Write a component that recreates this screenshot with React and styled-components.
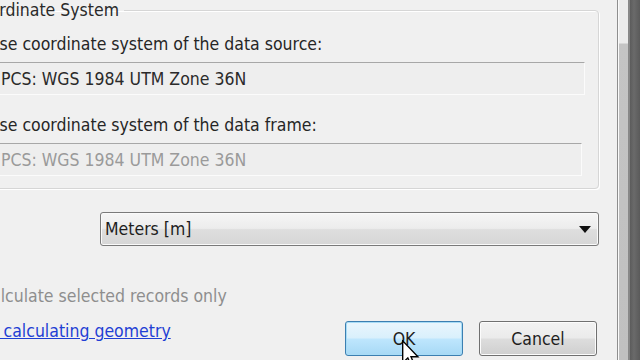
import React from "react";
import styled, { createGlobalStyle } from "styled-components";

const Global = createGlobalStyle`
  html, body { margin: 0; padding: 0; background: #f0f0f0; }
  body { font-family: "DejaVu Sans Condensed", "DejaVu Sans", sans-serif; }
`;

const Screen = styled.div`
  width: 640px;
  height: 360px;
  overflow: hidden;
  display: flex;
  background: #f0f0f0;
  position: relative;
  font-size: 17.5px;
  color: #222;
`;

const Client = styled.div`
  flex: 1;
  display: flex;
  flex-direction: column;
  margin-left: -50px;
  padding-right: 18px;
  min-width: 0;
`;

const Group = styled.fieldset`
  margin: 0;
  padding: 0 13px 12px 37px;
  border: 1px solid #d6d6d6;
  box-shadow: inset 1px 1px 0 #fff, 1px 1px 0 #fff;
  border-radius: 4px;
  display: flex;
  flex-direction: column;
`;

const Legend = styled.legend`
  padding: 0 5px;
  margin-left: -24px;
  line-height: 20px;
  color: #2a2a2a;
`;

const Label = styled.div`
  line-height: 20px;
  height: 20px;
  margin: ${(p) => p.$top}px 0 8px 0;
  color: #262626;
  white-space: nowrap;
`;

const Field = styled.div`
  height: 33px;
  box-sizing: border-box;
  border-top: 1px solid #a7a7a7;
  border-left: 1px solid #a7a7a7;
  border-right: 1px solid #fbfbfb;
  border-bottom: 1px solid #fbfbfb;
  background: #eeeeee;
  margin: 0 ${(p) => p.$right}px 0 8px;
  padding: 0 0 0 4px;
  display: flex;
  align-items: center;
  color: ${(p) => (p.$disabled ? "#9a9a9a" : "#2a2a2a")};
  white-space: nowrap;
`;

const UnitsRow = styled.div`
  display: flex;
  justify-content: flex-end;
  margin-top: 23px;
`;

const Combo = styled.div`
  width: 499px;
  height: 34px;
  box-sizing: border-box;
  border: 1px solid #7a7a7a;
  border-radius: 3px;
  background: linear-gradient(#f6f6f6 0%, #ececec 48%, #dedede 52%, #d6d6d6 100%);
  box-shadow: inset 0 0 0 1px #fafafa;
  display: flex;
  align-items: center;
  justify-content: space-between;
  padding: 0 7px 0 4px;
  color: #1e1e1e;
`;

const Arrow = styled.span`
  width: 0;
  height: 0;
  border-left: 6px solid transparent;
  border-right: 6px solid transparent;
  border-top: 7px solid #111;
`;

const Check = styled.div`
  margin: 40px 0 0 0;
  line-height: 20px;
  color: #8e8e8e;
  white-space: nowrap;
  padding-left: 30px;
`;

const Footer = styled.div`
  display: flex;
  align-items: flex-start;
  margin-top: 15px;
  padding: 0 2px 0 2px;
`;

const Link = styled.a`
  color: #1f3fd4;
  text-decoration: underline;
  flex: 1;
  white-space: nowrap;
  line-height: 20px;
  margin-top: 0;
`;

const Button = styled.div`
  width: 118px;
  height: 35px;
  flex-shrink: 0;
  box-sizing: border-box;
  border-radius: 3px;
  border: 1px solid ${(p) => (p.$focus ? "#3c7fb1" : "#707070")};
  background: ${(p) =>
    p.$focus
      ? "linear-gradient(#eaf6fd 0%, #d9f0fc 48%, #bee6fd 52%, #a7d9f5 100%)"
      : "linear-gradient(#f2f2f2 0%, #ebebeb 48%, #dddddd 52%, #cfcfcf 100%)"};
  box-shadow: inset 0 0 0 1px ${(p) => (p.$focus ? "#a8dcf6" : "#fcfcfc")};
  display: flex;
  align-items: center;
  justify-content: center;
  color: #1e1e1e;
  margin-left: ${(p) => p.$gap || 0}px;
`;

const Frame = styled.div`
  width: 23px;
  display: flex;
  flex-shrink: 0;
`;

const FrameLine = styled.div`
  width: 1px;
  background: #8e8e8e;
`;

const FrameGlass = styled.div`
  width: 9px;
  border-left: 1px solid #fafafa;
  background: linear-gradient(#ececec 0px, #ececec 43px, #c4c4c4 44px, #c0c0c0 100%);
`;

const FrameOuter = styled.div`
  flex: 1;
  border-left: 2px solid #888;
  background: linear-gradient(90deg, #5c5c5c, #6a6a6a 40%, #5a5a5a);
`;

const Cursor = styled.svg`
  position: absolute;
  left: 402px;
  top: 340px;
`;

export default function App() {
  return (
    <>
      <Global />
      <Screen>
        <Client>
          <Group>
            <Legend>Coordinate System</Legend>
            <Label $top={14}>Use coordinate system of the data source:</Label>
            <Field $right={0}>PCS: WGS 1984 UTM Zone 36N</Field>
            <Label $top={20}>Use coordinate system of the data frame:</Label>
            <Field $right={3} $disabled>PCS: WGS 1984 UTM Zone 36N</Field>
          </Group>
          <UnitsRow>
            <Combo>
              <span>Meters [m]</span>
              <Arrow />
            </Combo>
          </UnitsRow>
          <Check>Calculate selected records only</Check>
          <Footer>
            <Link>About calculating geometry</Link>
            <Button $focus>OK</Button>
            <Button $gap={16}>Cancel</Button>
          </Footer>
        </Client>
        <Frame>
          <FrameLine />
          <FrameGlass />
          <FrameOuter />
        </Frame>
        <Cursor width="18" height="28" viewBox="0 0 13 20">
          <path d="M0.5 0.5 L0.5 16.5 L4.2 12.8 L6.8 18.8 L9 17.8 L6.5 12 L11.5 12 Z" fill="#fff" stroke="#000" strokeWidth="1" strokeLinejoin="miter" />
        </Cursor>
      </Screen>
    </>
  );
}
